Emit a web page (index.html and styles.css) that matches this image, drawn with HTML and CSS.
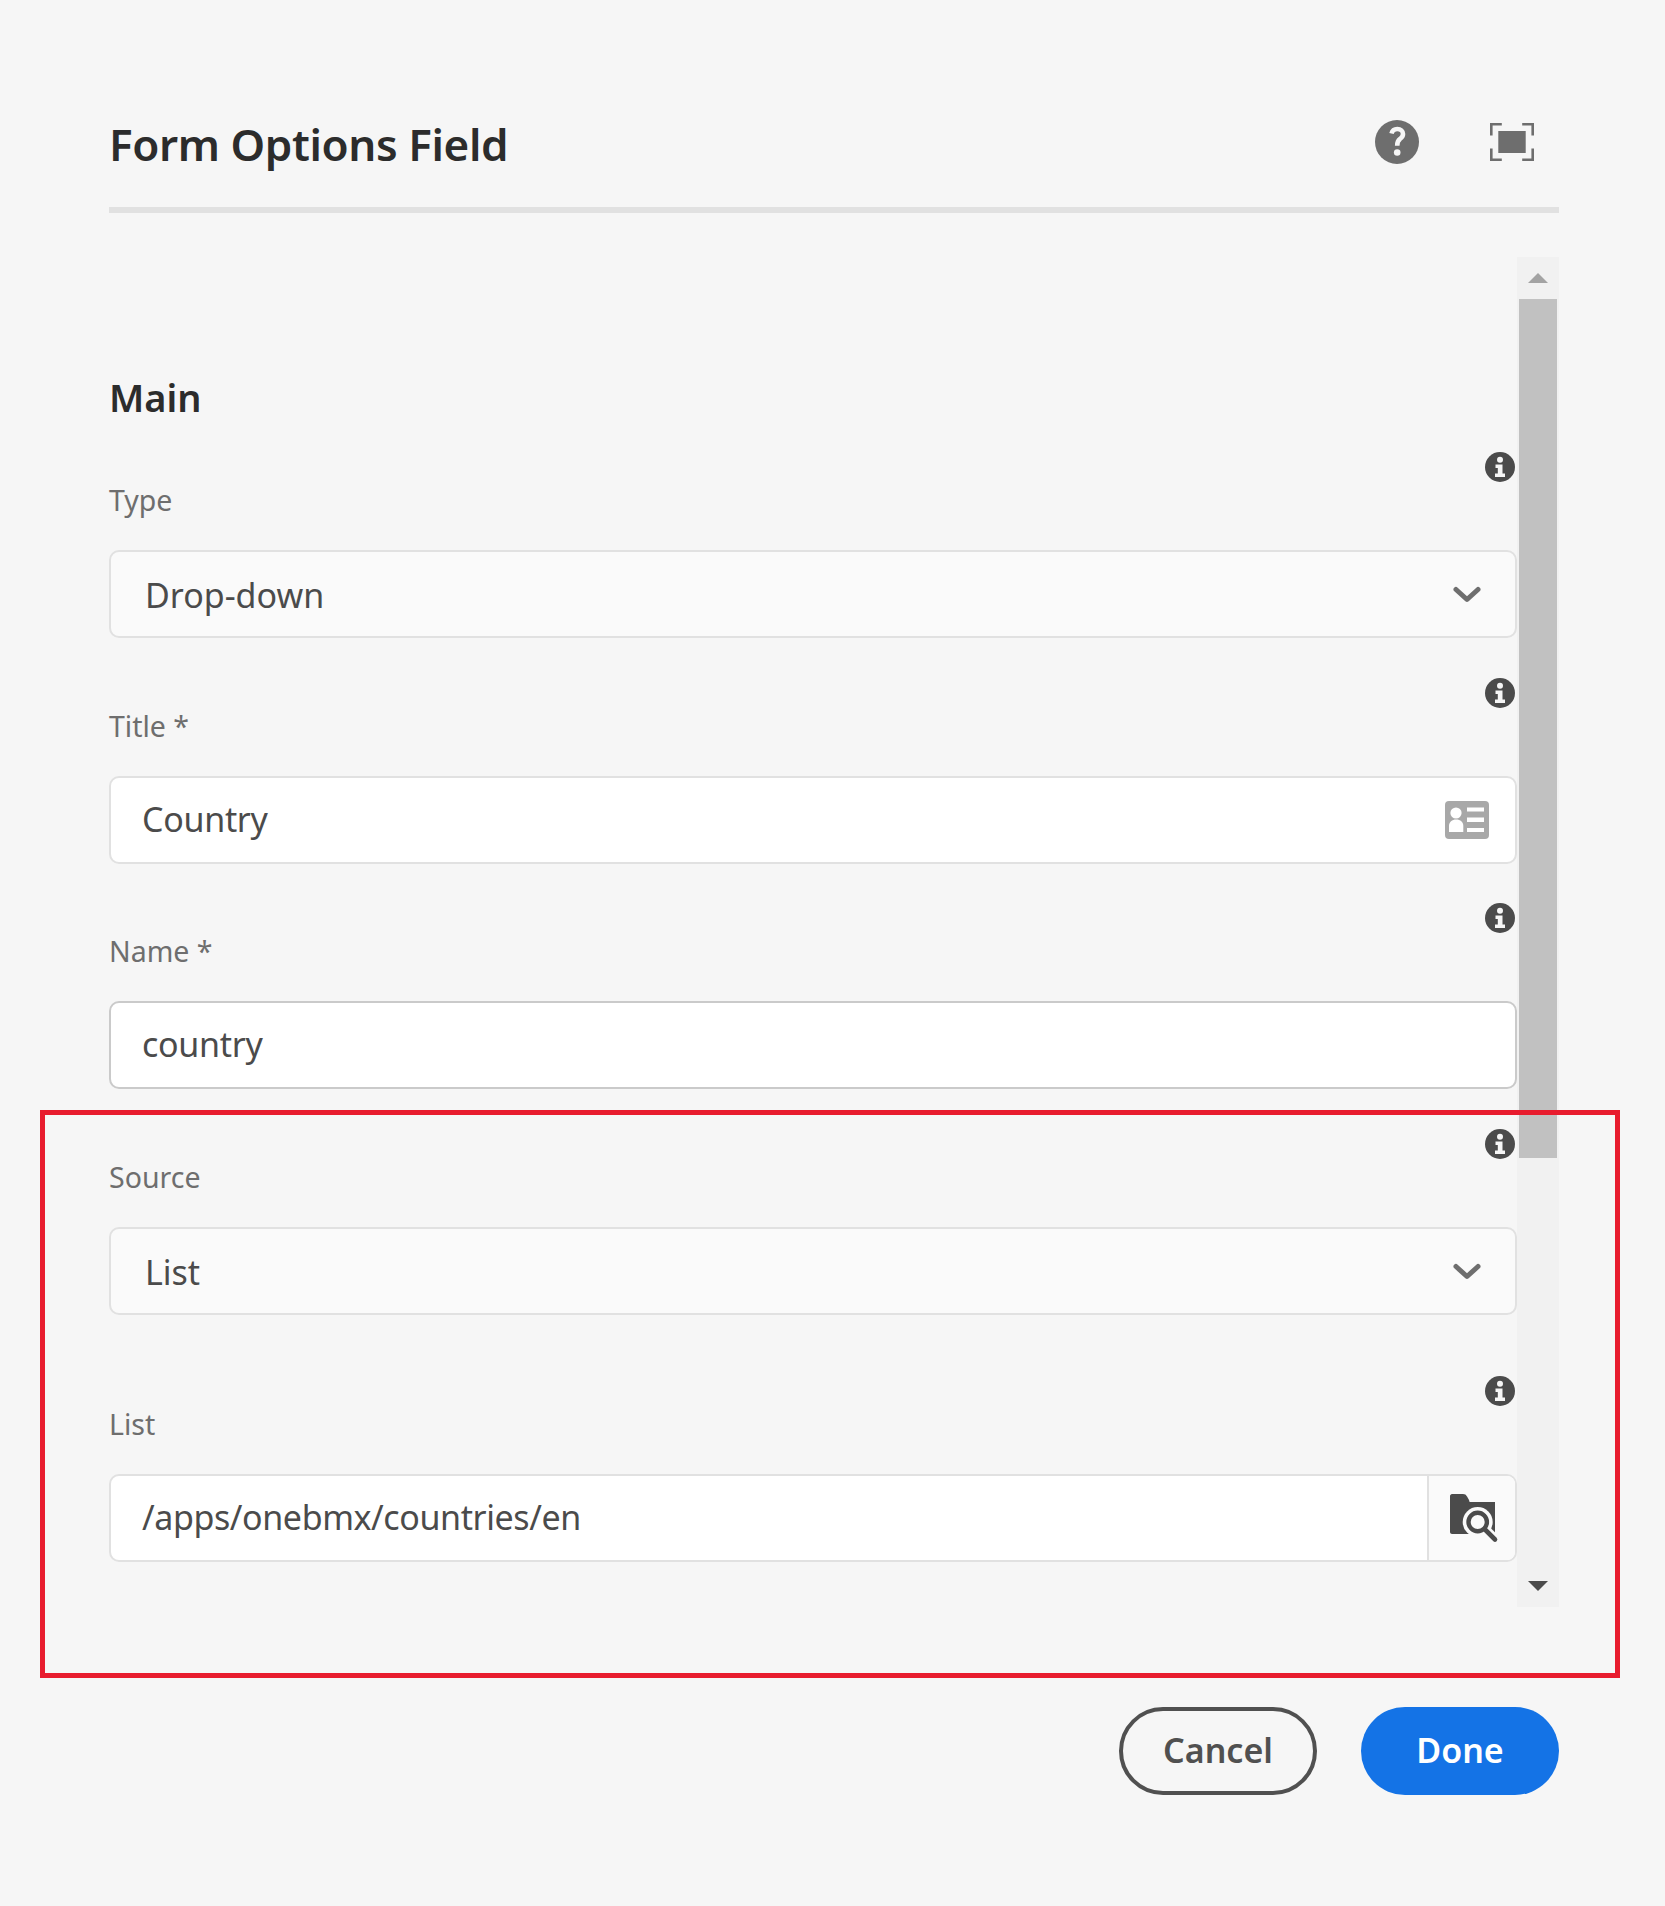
FILE: index.html
```html
<!DOCTYPE html>
<html lang="en">
<head>
<meta charset="utf-8">
<title>Form Options Field</title>
<link rel="stylesheet" href="styles.css">
</head>
<body>
<div class="dialog">
  <header class="dialog-head">
    <h1 class="dialog-title">Form Options Field</h1>
    <div class="head-actions">
      <svg class="icon-help" viewBox="0 0 44 44"><circle cx="22" cy="22" r="22" fill="#6e6e6e"/><path d="M16.500 13.500c.8-3 3-4.500 5.800-4.500 3.400 0 5.700 2 5.700 5 0 2.400-1.200 3.700-3 5-1.900 1.300-2.800 2.400-2.800 6.800" fill="none" stroke="#f6f6f6" stroke-width="4.600"/><circle cx="22.200" cy="32.500" r="3.300" fill="#f6f6f6"/></svg>
      <svg class="icon-full" viewBox="0 0 44 38"><path d="M1.300 12.500V1.300h10.500M32.200 1.300h10.500v11.200M42.700 25.500v11.200H32.200M11.800 36.700H1.300V25.500" fill="none" stroke="#6e6e6e" stroke-width="2.600"/><rect x="8.300" y="8" width="27.400" height="22" fill="#6e6e6e"/></svg>
    </div>
  </header>
  <div class="dialog-rule"></div>
  <div class="dialog-body">
    <main class="form">
      <h2 class="section-title">Main</h2>

      <div class="field">
        <div class="field-head"><label class="field-label">Type</label><svg class="icon-info" viewBox="0 0 30 30"><use href="#info"/></svg></div>
        <div class="control control-select"><span class="value value-select">Drop-down</span><svg class="icon-chevron" viewBox="0 0 28 18"><path d="M3 4.500l11 10 11-10" fill="none" stroke="#6e6e6e" stroke-width="5" stroke-linecap="round" stroke-linejoin="round"/></svg></div>
      </div>

      <div class="field field-tight">
        <div class="field-head"><label class="field-label">Title *</label><svg class="icon-info" viewBox="0 0 30 30"><use href="#info"/></svg></div>
        <div class="control control-input"><span class="value">Country</span>
          <svg class="icon-card" viewBox="0 0 44 38"><rect width="44" height="38" rx="4" fill="#a8a8a8"/><circle cx="11" cy="12" r="5.600" fill="#fff"/><path d="M4 31v-6c0-4 3-6.500 7.200-6.500s7.100 2.500 7.100 6.500v6z" fill="#fff"/><path d="M22 6.500h17v4H22zM22 16.500h17v4.500H22zM22 27h17v4H22z" fill="#fff"/></svg>
        </div>
      </div>

      <div class="field">
        <div class="field-head"><label class="field-label">Name *</label><svg class="icon-info" viewBox="0 0 30 30"><use href="#info"/></svg></div>
        <div class="control control-strong"><span class="value">country</span></div>
      </div>

      <div class="field">
        <div class="field-head"><label class="field-label">Source</label><svg class="icon-info" viewBox="0 0 30 30"><use href="#info"/></svg></div>
        <div class="control control-select"><span class="value value-select">List</span><svg class="icon-chevron" viewBox="0 0 28 18"><path d="M3 4.500l11 10 11-10" fill="none" stroke="#6e6e6e" stroke-width="5" stroke-linecap="round" stroke-linejoin="round"/></svg></div>
      </div>

      <div class="field field-list">
        <div class="field-head"><label class="field-label">List</label><svg class="icon-info" viewBox="0 0 30 30"><use href="#info"/></svg></div>
        <div class="control control-path"><span class="value value-path">/apps/onebmx/countries/en</span>
          <span class="picker"><svg class="icon-folder" viewBox="0 0 49 49"><path d="M0 2c0-1 1-2 2-2h11c2 0 3 .8 4 2.500L19 6H0z" fill="#4b4b4b"/><path d="M0 6h19l.6 2H45v32H2c-1 0-2-1-2-2z" fill="#4b4b4b"/><circle cx="27.700" cy="28" r="15" fill="#fafafa"/><path d="M36 35l12 12" stroke="#fafafa" stroke-width="8"/><circle cx="27.700" cy="28" r="9.200" fill="#fafafa" stroke="#4b4b4b" stroke-width="4.400"/><path d="M35.500 36l9.500 9.500" stroke="#4b4b4b" stroke-width="4.600" stroke-linecap="round"/></svg></span>
        </div>
      </div>
    </main>
    <div class="scrollbar">
      <div class="scroll-btn"><span class="arrow arrow-up"></span></div>
      <div class="scroll-thumb"></div>
      <div class="scroll-rest"></div>
      <div class="scroll-btn"><span class="arrow arrow-down"></span></div>
    </div>
  </div>
  <footer class="dialog-foot">
    <button class="btn btn-outline"><span class="btn-text">Cancel</span></button>
    <button class="btn btn-primary"><span class="btn-text">Done</span></button>
  </footer>
  <div class="highlight"></div>
</div>
<svg class="sprite" width="0" height="0"><defs><g id="info"><circle cx="15" cy="15" r="15" fill="#4b4b4b"/><circle cx="15" cy="7.800" r="3" fill="#f6f6f6"/><path d="M10.500 12.500h7v9h2.500v3.500H10v-3.500h2.800v-5.600h-2.300z" fill="#f6f6f6"/></g></defs></svg>
</body>
</html>
```
FILE: styles.css
```css
* { box-sizing: border-box; }
html, body { margin: 0; padding: 0; }
body {
  width: 1665px;
  height: 1906px;
  background: #f6f6f6;
  font-family: "Noto Sans", "Open Sans", sans-serif;
  color: #2c2c2c;
  overflow: hidden;
}
.dialog {
  position: relative;
  height: 1906px;
  padding: 112px 106px 0 109px;
}
.dialog-head {
  display: flex;
  justify-content: space-between;
  align-items: flex-start;
  height: 95px;
}
.dialog-title {
  margin: 0;
  font-size: 44px;
  line-height: 64px;
  font-weight: 600;
  letter-spacing: -0.4px;
  color: #2c2c2c;
}
.head-actions {
  display: flex;
  align-items: center;
  gap: 71px;
  padding: 8px 25px 0 0;
}
.icon-help { width: 44px; height: 44px; display: block; }
.icon-full { width: 44px; height: 38px; display: block; }
.dialog-rule { height: 6px; background: #e1e1e1; }
.dialog-body {
  display: flex;
  margin-top: 44px;
  height: 1350px;
}
.form { width: 1408px; flex: none; }
.section-title {
  margin: 0;
  padding-top: 115px;
  font-size: 38px;
  line-height: 50px;
  font-weight: 600;
  color: #2c2c2c;
  height: 195px;
}
.field { margin-bottom: 40px; }
.field-tight { margin-bottom: 39px; }
.field-list { margin-top: 61px; }
.field-head {
  display: flex;
  justify-content: space-between;
  align-items: flex-start;
  height: 98px;
  padding-right: 2px;
}
.field-label {
  align-self: flex-end;
  padding-bottom: 30px;
  font-size: 28.500px;
  line-height: 40px;
  color: #6e6e6e;
}
.icon-info { width: 30px; height: 30px; display: block; }
.control {
  display: flex;
  align-items: center;
  justify-content: space-between;
  height: 88px;
  border: 2px solid #e1e1e1;
  border-radius: 10px;
  background: #fff;
  padding-left: 31px;
  padding-right: 26px;
}
.control-strong { border-color: #cacaca; }
.control-select { background: #fafafa; padding-right: 34px; }
.control-path { padding-right: 0; overflow: hidden; }
.value {
  font-size: 34px;
  line-height: 44px;
  letter-spacing: -0.3px;
  color: #4b4b4b;
  padding-bottom: 3px;
}
.value-select { padding: 2px 0 0 3px; letter-spacing: 0; }
.value-path { letter-spacing: -0.4px; }
.icon-chevron { width: 28px; height: 18px; display: block; }
.icon-card { width: 44px; height: 38px; display: block; }
.picker {
  width: 88px;
  height: 84px;
  flex: none;
  display: flex;
  align-items: center;
  justify-content: center;
  padding-left: 5px;
  background: #fafafa;
  border-left: 2px solid #e1e1e1;
}
.icon-folder { width: 49px; height: 49px; display: block; }
.scrollbar {
  width: 42px;
  flex: none;
  display: flex;
  flex-direction: column;
  background: #f1f1f1;
}
.scroll-btn {
  width: 100%;
  height: 42px;
  flex: none;
  display: flex;
  align-items: center;
  justify-content: center;
}
.arrow { width: 0; height: 0; border-left: 10px solid transparent; border-right: 10px solid transparent; }
.arrow-up { border-bottom: 10px solid #a3a3a3; }
.arrow-down { border-top: 10px solid #4b4b4b; }
.scroll-thumb { width: 38px; height: 859px; flex: none; margin-left: 2px; background: #c1c1c1; }
.scroll-rest { flex: 1; }
.dialog-foot {
  display: flex;
  justify-content: flex-end;
  gap: 44px;
  margin-top: 100px;
}
.btn {
  width: 198px;
  height: 88px;
  border-radius: 44px;
  font-family: inherit;
  font-size: 34px;
  font-weight: 600;
  padding: 0 0 2px;
}
.btn-text { display: block; }
.btn-outline { background: transparent; border: 4px solid #505050; color: #505050; }
.btn-primary { background: #1473e6; border: 0; color: #fff; }
.highlight {
  position: absolute;
  left: 40px;
  top: 1110px;
  width: 1580px;
  height: 568px;
  border: 5px solid #e81c2e;
  pointer-events: none;
}
.sprite { position: absolute; }
```
